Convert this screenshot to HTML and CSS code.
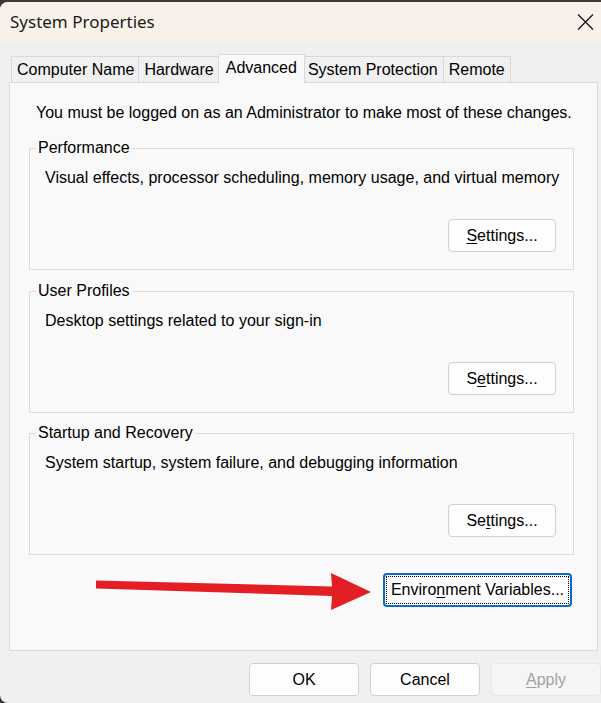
FILE: index.html
```html
<!DOCTYPE html>
<html lang="en">
<head>
<meta charset="utf-8">
<title>System Properties</title>
<link rel="stylesheet" href="styles.css">
</head>
<body>
<div class="window">
  <div class="titlebar">
    <span class="title">System Properties</span>
    <svg class="close" width="17" height="16" viewBox="0 0 17 16"><path d="M1 0.5 L16 15.5 M16 0.5 L1 15.5" stroke="#1a1a1a" stroke-width="1.4" fill="none"/></svg>
  </div>
  <div class="tabs">
    <div class="tab">Computer Name</div>
    <div class="tab">Hardware</div>
    <div class="tab active">Advanced</div>
    <div class="tab">System Protection</div>
    <div class="tab">Remote</div>
  </div>
  <div class="panel">
    <p class="notice">You must be logged on as an Administrator to make most of these changes.</p>
    <fieldset class="group">
      <legend>Performance</legend>
      <div class="group-body">
        <p class="desc">Visual effects, processor scheduling, memory usage, and virtual memory</p>
        <button class="btn settings"><u>S</u>ettings...</button>
      </div>
    </fieldset>
    <fieldset class="group">
      <legend>User Profiles</legend>
      <div class="group-body">
        <p class="desc">Desktop settings related to your sign-in</p>
        <button class="btn settings">S<u>e</u>ttings...</button>
      </div>
    </fieldset>
    <fieldset class="group group-last">
      <legend>Startup and Recovery</legend>
      <div class="group-body">
        <p class="desc">System startup, system failure, and debugging information</p>
        <button class="btn settings">Se<u>t</u>tings...</button>
      </div>
    </fieldset>
    <div class="env-row">
      <button class="btn env">Enviro<u>n</u>ment Variables...</button>
    </div>
  </div>
  <div class="footer">
    <button class="btn action">OK</button>
    <button class="btn action">Cancel</button>
    <button class="btn action disabled"><u>A</u>pply</button>
  </div>
  <svg class="arrow" width="601" height="703" viewBox="0 0 601 703">
    <polygon points="96,580.5 332,586.5 331,573 371,592 331,610 332,596 96,588.5" fill="#e31e24"/>
  </svg>
</div>
</body>
</html>
```
FILE: styles.css
```css
* { box-sizing: border-box; }

html, body {
  margin: 0;
  padding: 0;
}

body {
  background: #3b3a39;
  font-family: "Liberation Sans", Arial, sans-serif;
  font-size: 16px;
  color: #000;
  width: 601px;
  height: 703px;
  overflow: hidden;
}

.window {
  position: relative;
  margin-top: 2px;
  width: 601px;
  height: 701px;
  background: #f0f0f0;
  border-top-left-radius: 8px;
  border-bottom-left-radius: 8px;
  overflow: hidden;
}

.titlebar {
  height: 41px;
  background: #f8f1ea;
  display: flex;
  align-items: center;
  justify-content: space-between;
  padding: 0 7px 0 10px;
}

.title {
  font-family: "Noto Sans", "Open Sans", sans-serif;
  font-size: 17px;
  color: #1b1b1b;
  margin-top: -3px;
}

.close {
  display: block;
  margin-top: -2px;
}

.tabs {
  display: flex;
  align-items: flex-end;
  height: 28px;
  margin-top: 11px;
  padding-left: 11px;
}

.tab {
  position: relative;
  height: 26px;
  line-height: 25px;
  padding: 0 5px 0 5px;
  border: 1px solid #d9d9d9;
  border-bottom: none;
  margin-left: -1px;
  background: #f0f0f0;
  white-space: nowrap;
}

.tab:first-child { margin-left: 0; padding-right: 4px; }

.tab.active {
  z-index: 2;
  height: 29px;
  line-height: 26px;
  margin: 0 -2px -1px -2px;
  padding: 0 7px 0 7px;
  background: #f9f9f9;
}

.panel {
  position: relative;
  z-index: 1;
  margin: 0 3px 0 9px;
  height: 569px;
  background: #f9f9f9;
  border: 1px solid #dadada;
  padding: 21px 23px 0 19px;
}

.notice {
  margin: 0 0 17px 7px;
  line-height: 18px;
  white-space: nowrap;
}

.group {
  margin: 0 0 12px 0;
  padding: 0;
  border: 1px solid #dcdcdc;
  min-width: 0;
}

.group + .group-last {
  margin-top: -1px;
}

.group legend {
  margin-left: 6px;
  padding: 0 2px;
  line-height: 18px;
}

.group-body {
  display: flex;
  flex-direction: column;
  padding: 12px 17px 17px 15px;
}

.desc {
  margin: 0;
  line-height: 18px;
  white-space: nowrap;
}

.btn {
  font-family: "Liberation Sans", Arial, sans-serif;
  font-size: 16px;
  color: #000;
  background: #fdfdfd;
  border: 1px solid #d0d0d0;
  border-radius: 4px;
  padding: 0;
  height: 33px;
  line-height: 30px;
  text-align: center;
}

.btn u { text-underline-offset: 2px; }

.settings {
  align-self: flex-end;
  width: 108px;
  margin-top: 32px;
}

.env-row {
  display: flex;
  justify-content: flex-end;
  margin-top: 18px;
  padding-right: 2px;
}

.env {
  position: relative;
  width: 189px;
  height: 34px;
  border: 2px solid #0a6cc7;
  background: #fdfdfd;
}

.env::after {
  content: "";
  position: absolute;
  left: 1px;
  right: 1px;
  top: 1px;
  bottom: 1px;
  border: 1px dotted #000;
}

.footer {
  display: flex;
  justify-content: flex-end;
  gap: 11px;
  margin-top: 12px;
}

.action {
  width: 110px;
  height: 33px;
}

.action.disabled {
  background: #f5f5f5;
  border-color: #e8e8e8;
  color: #a3a3a3;
}

.arrow {
  position: absolute;
  left: 0;
  top: -2px;
  z-index: 3;
  pointer-events: none;
}
```
